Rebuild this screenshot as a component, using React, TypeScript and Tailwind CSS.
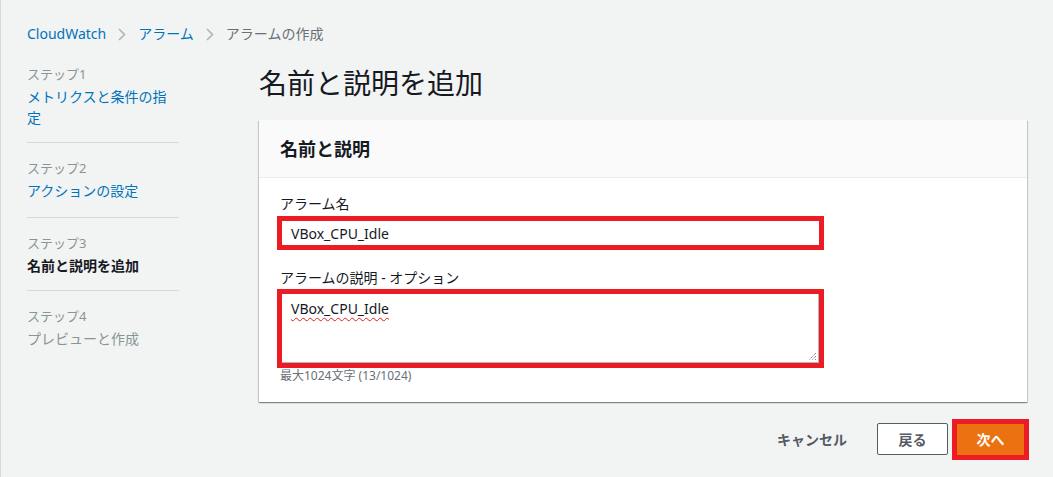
import React from 'react'

const font = { fontFamily: '"Noto Sans", "Noto Sans CJK JP", sans-serif' }

function Chevron() {
  return (
    <svg width="8" height="13" viewBox="0 0 8 13" className="shrink-0">
      <path d="M1 1l5.5 5.5L1 12" fill="none" stroke="#aab7b8" strokeWidth="1.6" />
    </svg>
  )
}

type Step = { label: string; title: string; state: 'link' | 'current' | 'disabled' }

const steps: Step[] = [
  { label: 'ステップ1', title: 'メトリクスと条件の指定', state: 'link' },
  { label: 'ステップ2', title: 'アクションの設定', state: 'link' },
  { label: 'ステップ3', title: '名前と説明を追加', state: 'current' },
  { label: 'ステップ4', title: 'プレビューと作成', state: 'disabled' },
]

function StepNav() {
  return (
    <nav className="w-[152px] shrink-0 pt-[5px]">
      {steps.map((s, i) => (
        <div key={s.label}>
          {i > 0 && <div className="h-px bg-[#d5dbdb]" />}
          <div className={i === 1 ? 'pt-[13px] pb-[16px]' : 'pt-[13px] pb-[14px]'}>
            <div className="text-[13px] leading-[24px] text-[#879596]">{s.label}</div>
            <div
              className={
                s.state === 'current'
                  ? 'text-[14px] leading-[21px] font-bold text-[#16191f]'
                  : s.state === 'link'
                    ? 'text-[14px] leading-[21px] text-[#0073bb]'
                    : 'text-[14px] leading-[21px] text-[#879596]'
              }
            >
              {s.title}
            </div>
          </div>
        </div>
      ))}
    </nav>
  )
}

export default function App() {
  return (
    <div
      className="h-[477px] w-full overflow-hidden bg-[#f2f3f3] border-l border-[#d5dbdb] text-[#16191f]"
      style={font}
    >
      <div className="flex items-center gap-[12px] pl-[26px] pt-[24px] text-[14px] leading-[20px]">
        <span className="text-[#0073bb]">CloudWatch</span>
        <Chevron />
        <span className="text-[#0073bb]">アラーム</span>
        <Chevron />
        <span className="text-[#687078]">アラームの作成</span>
      </div>

      <div className="flex pl-[26px]">
        <StepNav />

        <main className="ml-[80px] w-[768px]">
          <h1 className="mt-[21px] text-[28px] leading-[36px] font-normal text-[#16191f]">
            名前と説明を追加
          </h1>

          <section className="mt-[19px] bg-white shadow-[0_1px_1px_0_rgba(0,28,36,0.3),1px_1px_1px_0_rgba(0,28,36,0.15),-1px_1px_1px_0_rgba(0,28,36,0.15)]">
            <header className="h-[58px] flex items-center px-[21px] bg-[#fafafa] border-b border-[#eaeded]">
              <h2 className="text-[18px] leading-[24px] font-bold text-[#16191f]">名前と説明</h2>
            </header>

            <div className="px-[18px] pt-[16px] pb-[18px]">
              <label className="block pl-[3px] text-[14px] leading-[20px] text-[#16191f]">アラーム名</label>
              <div className="mt-[2px] w-[547px] h-[34px] border-[5px] border-[#ed1c24] bg-white flex items-center pl-[9px] text-[14px] text-[#16191f]">
                VBox_CPU_Idle
              </div>

              <label className="mt-[18px] block pl-[3px] text-[14px] leading-[20px] text-[#16191f]">
                アラームの説明 - オプション
              </label>
              <div className="mt-px w-[547px] h-[79px] border-[5px] border-[#ed1c24]">
                <div className="relative h-full bg-white border-r border-b border-[#aab7b8] pl-[9px] pt-[5px] text-[14px] leading-[20px] text-[#16191f]">
                  <span className="underline decoration-wavy decoration-[#e02020] decoration-1 underline-offset-[3px]">
                    VBox_CPU_Idle
                  </span>
                  <svg width="9" height="9" viewBox="0 0 9 9" className="absolute right-[1px] bottom-[1px]">
                    <path d="M8 1L1 8M8 4L4 8M8 7L7 8" stroke="#555" strokeWidth="1" strokeDasharray="1 1" />
                  </svg>
                </div>
              </div>
              <div className="pl-[3px] text-[12px] leading-[16px] text-[#687078]">最大1024文字 (13/1024)</div>
            </div>
          </section>

          <div className="mt-[21px] flex items-center justify-end pr-[3px]">
            <button className="h-[32px] px-[2px] text-[14px] font-bold text-[#545b64]">キャンセル</button>
            <button className="ml-[28px] h-[32px] w-[71px] rounded-[2px] border border-[#545b64] bg-white text-[14px] font-bold text-[#545b64]">
              戻る
            </button>
            <button className="ml-[9px] h-[31px] w-[67px] bg-[#ec7211] text-[14px] font-bold text-white outline-[5px] outline-solid outline-[#ed1c24]">
              次へ
            </button>
          </div>
        </main>
      </div>
    </div>
  )
}
